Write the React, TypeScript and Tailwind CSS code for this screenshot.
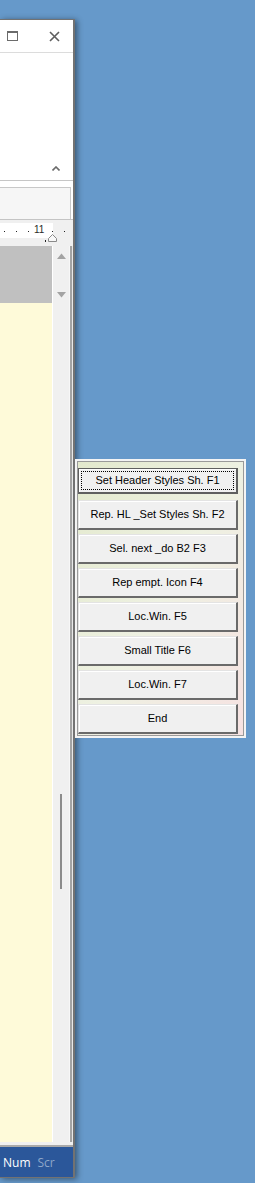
import React from 'react'

const macros = [
  'Set Header Styles Sh. F1',
  'Rep. HL _Set Styles Sh. F2',
  'Sel. next _do B2 F3',
  'Rep empt. Icon F4',
  'Loc.Win. F5',
  'Small Title F6',
  'Loc.Win. F7',
  'End',
]

function MacroButton({ label, focused }: { label: string; focused?: boolean }) {
  if (focused) {
    // default button: dark frame plus dotted focus rect
    return (
      <div className="h-[30px] pt-px">
        <button className="w-[160px] h-[26px] border border-[#5f5f5f] border-r-2 border-b-2 bg-[#f0f0f0] p-[2px] shadow-[inset_1px_1px_0_#ffffff]">
          <div className="w-full h-full border border-dotted border-black flex items-center justify-center text-[11px] text-black leading-none">
            {label}
          </div>
        </button>
      </div>
    )
  }
  return (
    <button className="w-[160px] h-[30px] bg-[#f0f0f0] border-t border-l border-t-[#e3e3e3] border-l-[#e3e3e3] border-r-2 border-b-2 border-r-[#6a6a6a] border-b-[#6a6a6a] shadow-[inset_1px_1px_0_#ffffff] flex items-center justify-center text-[11px] text-black leading-none">
      {label}
    </button>
  )
}

export default function App() {
  return (
    <div
      className="relative w-[255px] h-[1183px] overflow-hidden bg-[#6699ca]"
      style={{ fontFamily: '"Liberation Sans", Arial, sans-serif' }}
    >
      {/* ── Editor window (clipped at the left screen edge) ── */}
      <div className="absolute left-0 top-[19px] w-[75px] h-[1159px] flex flex-col border-t border-b border-r-2 border-[#727272] bg-white shadow-[2px_1px_6px_rgba(0,0,0,0.45)]">
        {/* title bar */}
        <div className="h-[32px] flex items-center pl-[7px] gap-[31px] bg-white">
          <svg width="11" height="10" viewBox="0 0 11 10">
            <rect x="0.5" y="0.5" width="10" height="9" fill="none" stroke="#6b6b6b" />
            <rect x="0" y="0" width="11" height="2" fill="#6b6b6b" />
          </svg>
          <svg width="11" height="11" viewBox="0 0 11 11">
            <path d="M1 1 L10 10 M10 1 L1 10" stroke="#5e5e5e" strokeWidth="1.6" />
          </svg>
        </div>
        <div className="h-px bg-[#dcdcdc]" />

        {/* ribbon */}
        <div className="h-[127px] bg-white flex items-end justify-end pr-[13px] pb-[9px]">
          <svg width="8" height="5" viewBox="0 0 8 5">
            <path d="M0.5 4.5 L4 1 L7.5 4.5" stroke="#6b6b6b" strokeWidth="1.6" fill="none" />
          </svg>
        </div>
        <div className="h-px bg-[#c6c6c6]" />

        {/* quick bar */}
        <div className="h-[38px] bg-white pt-[6px]">
          <div className="w-[71px] h-[32px] border-t border-r border-[#c8c8c8] bg-[#f6f6f6]" />
        </div>

        {/* ruler */}
        <div className="relative h-[27px] bg-[#f0f0f0] border-t border-[#c4c4c4]">
          <div className="absolute left-0 top-[3px] w-[53px] h-[15px] bg-white" />
          <svg className="absolute left-0 top-0" width="73" height="27" viewBox="0 0 73 27">
            <rect x="4" y="11" width="1" height="1" fill="#222" />
            <rect x="16" y="11" width="1" height="1" fill="#222" />
            <rect x="28" y="11" width="1" height="1" fill="#222" />
            <rect x="52" y="11" width="1" height="1" fill="#222" />
            <rect x="64" y="11" width="1" height="1" fill="#222" />
            <rect x="45" y="20" width="1" height="2" fill="#222" />
            <path d="M48.5 21.5 L48.5 18.5 L52.5 14.5 L56.5 18.5 L56.5 21.5 Z" fill="#f8f8f8" stroke="#8a8a8a" />
          </svg>
          <span className="absolute left-[34px] top-[5px] text-[10px] leading-none text-[#2a2a2a]">11</span>
        </div>

        {/* document body with vertical scrollbar */}
        <div className="flex-1 flex bg-[#f0f0f0]">
          <div className="w-[52px] flex flex-col">
            <div className="h-[57px] bg-[#c0c0c0]" />
            <div className="flex-1 bg-[#fefad9]" />
          </div>
          <div className="w-px bg-white" />
          <div className="w-[16px] bg-[#f0f0f0] flex flex-col items-center pt-[7px]">
            <svg width="9" height="6" viewBox="0 0 9 6">
              <path d="M0 6 L4.5 0.5 L9 6 Z" fill="#a3a3a3" />
            </svg>
            <svg className="mt-[33px]" width="9" height="6" viewBox="0 0 9 6">
              <path d="M0 0 L4.5 5.5 L9 0 Z" fill="#a3a3a3" />
            </svg>
            <div className="mt-[496px] w-[2px] h-[95px] bg-[#8b8b8b]" />
          </div>
          <div className="w-px bg-[#f7f7f7]" />
          <div className="w-[2px] bg-[#a3a3a3]" />
          <div className="w-px bg-[#e8e8e8]" />
        </div>
        <div className="h-[3px] bg-[#f0f0f0]" />
        <div className="h-[2px] bg-[#a9a9a9]" />

        {/* status bar */}
        <div className="h-[30px] bg-[#2b579a] flex items-center pl-[3px] gap-[7px] text-[12px] pt-[2px]">
          <span className="text-white" style={{ fontFamily: '"Open Sans", "Noto Sans", sans-serif' }}>Num</span>
          <span className="text-[#8ea6c9]" style={{ fontFamily: '"Open Sans", "Noto Sans", sans-serif' }}>Scr</span>
        </div>
      </div>

      {/* ── Macro panel ── */}
      <div className="absolute left-[75px] top-[459px] w-[171px] h-[279px] border-2 border-[#f4f4f4] bg-[#f4f4f4]">
        <div className="w-full h-full border border-[#9a9a9a] bg-gradient-to-br from-[#e3e9cd] via-[#eef1e2] to-[#f6e2e2] flex flex-col gap-[4px] pt-[4px]">
          {macros.map((m, i) => (
            <MacroButton key={m + i} label={m} focused={i === 0} />
          ))}
        </div>
      </div>
    </div>
  )
}
